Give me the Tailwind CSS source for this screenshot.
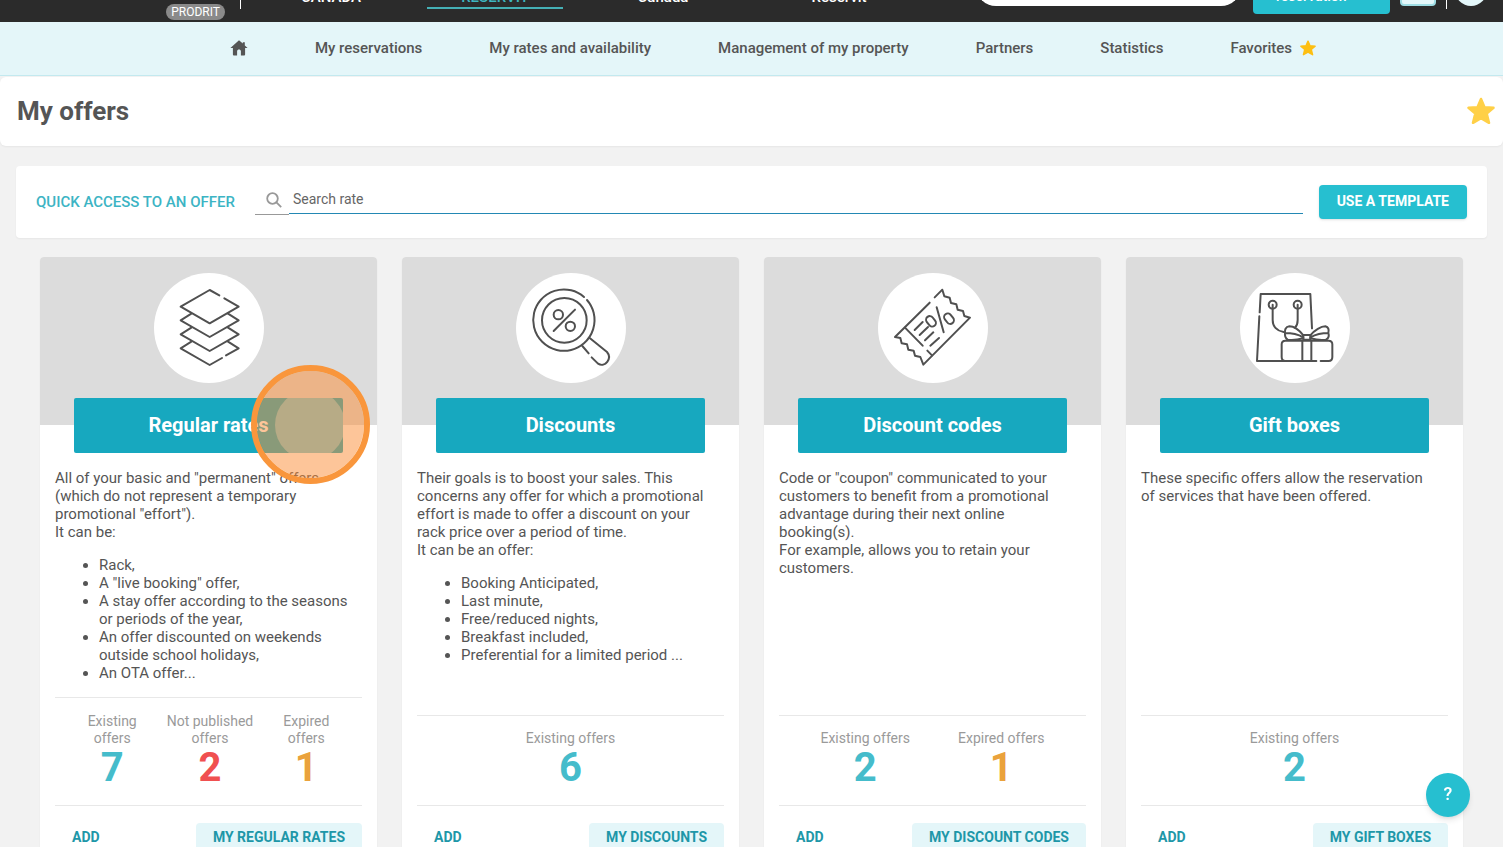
<!DOCTYPE html>
<html lang="en">
<head>
  <meta charset="UTF-8">
  <meta name="viewport" content="width=device-width, initial-scale=1.0">
  <title>My offers</title>
  <script src="https://cdn.jsdelivr.net/npm/@tailwindcss/browser@4"></script>
</head>
<body class="relative h-screen overflow-hidden bg-[#f2f2f2] font-[Roboto,sans-serif] text-[15px] leading-[18px] text-[#555]">

  <!-- Top bar, scrolled partly out of view -->
  <header class="-mt-[42px] flex h-16 items-start bg-[#2b2b2b] text-[15px] font-medium text-white">
    <div class="flex w-[240px] justify-end pt-[46px] pr-[15px]">
      <span class="h-4 rounded-full bg-[#8a8a8a] px-[5px] text-[12px] leading-4 font-normal">PRODRIT</span>
    </div>
    <div class="flex h-[51px] flex-1 items-start border-l border-white">
      <a href="#" class="ml-[22px] w-[136px] pt-[30px] text-center">CANADA</a>
      <a href="#" class="ml-7 h-[51px] w-[136px] border-b-2 border-[#45b0b5] pt-[30px] text-center text-[#3db5bf]">RESERVIT</a>
      <a href="#" class="ml-8 w-[136px] pt-[30px] text-center">Canada</a>
      <a href="#" class="ml-10 w-[136px] pt-[30px] text-center">Reservit</a>
    </div>
    <div class="flex items-start">
      <input type="text" aria-label="Search" class="mt-2 h-10 w-[265px] rounded-full bg-white px-4">
      <button class="ml-3 flex h-14 w-[137px] items-end rounded bg-[#26bfd0] pb-[9px] pl-[23px] text-[14px]">reservation</button>
      <button aria-label="Language" class="ml-[10px] mt-3 h-9 w-9 rounded border-2 border-[#9fdde4] bg-[#e4f7fa]"></button>
      <span class="ml-[10px] h-[51px] w-px bg-white"></span>
      <button aria-label="Account" class="mt-4 mr-4 ml-2 h-8 w-8 rounded-full bg-[#e4f7fa]"></button>
    </div>
  </header>

  <nav class="flex h-[54px] items-center justify-center gap-[67px] border-b border-[#c3e9ef] bg-[#e4f6f9] pb-0.5 pl-[43px] text-[15px] font-medium">
    <a href="#" aria-label="Home">
      <svg class="h-[18px] w-[18px]" viewBox="0 0 18 18" fill="#555"><path d="M9 1.200 0.400 9h2.500v6.600c0 .6.3.9.9.9h3.300v-4.300c0-2.400 3.800-2.400 3.800 0v4.300h3.300c.6 0 .9-.3.9-.9V9h2.500L14.800 6.400V3.200h-2v1.400z"/></svg>
    </a>
    <a href="#">My reservations</a>
    <a href="#">My rates and availability</a>
    <a href="#">Management of my property</a>
    <a href="#">Partners</a>
    <a href="#">Statistics</a>
    <a href="#" class="flex items-center gap-2">Favorites
      <svg class="h-4 w-4" viewBox="0 0 28 28" fill="#fdbf12" stroke="#fdbf12" stroke-width="2.500" stroke-linejoin="round"><path d="M14 2l3.500 8.200 9 .6-6.800 5.800 2.300 9.200-8-4.600-8 4.600 2.300-9.200L1.500 10.800l9-.6z"/></svg>
    </a>
  </nav>

  <div class="mt-px flex h-[69px] items-center justify-between rounded-md bg-white pr-2 pb-0.5 pl-[17px] shadow-xs">
    <h1 class="text-[26px] leading-8 font-bold">My offers</h1>
    <button aria-label="Remove from favorites">
      <svg class="h-7 w-7" viewBox="0 0 28 28" fill="#ffd047" stroke="#ffd047" stroke-width="2.500" stroke-linejoin="round"><path d="M14 2l3.500 8.200 9 .6-6.800 5.800 2.300 9.200-8-4.600-8 4.600 2.300-9.200L1.500 10.800l9-.6z"/></svg>
    </button>
  </div>

  <main>
    <section class="mx-4 mt-5 flex h-[72px] items-center rounded bg-white px-5 shadow-xs">
      <label for="rate" class="text-[15px] font-medium text-[#3cb4c4]">QUICK ACCESS TO AN OFFER</label>
      <div class="ml-5 flex flex-1 pb-1">
        <span class="flex h-[30px] w-[34px] items-center justify-center border-b border-[#999] pl-1">
          <svg class="h-4 w-4" viewBox="0 0 16 16" fill="none" stroke="#999" stroke-width="1.800"><circle cx="6.500" cy="6.500" r="5.300"/><path d="M10.400 10.400 15.200 15.200"/></svg>
        </span>
        <input id="rate" type="text" placeholder="Search rate" class="h-[29px] flex-1 border-b border-[#2388b4] pl-1 text-[14px] outline-none placeholder:text-[#666]">
      </div>
      <button class="ml-4 h-[34px] rounded bg-[#26bfd0] px-[18px] pb-0.5 text-[14px] font-bold text-white shadow">USE A TEMPLATE</button>
    </section>

    <div class="mt-[19px] grid grid-cols-4 gap-[25px] px-10">

      <!-- Regular rates -->
      <article class="flex h-[610px] flex-col rounded-sm bg-white shadow-xs">
        <div class="flex h-[168px] flex-col items-center rounded-t-sm bg-[#dcdcdc] pt-4">
          <svg class="h-[110px] w-[110px] shrink-0 rounded-full bg-white" viewBox="39 39 330 330" fill="none" stroke="#505050" stroke-width="6" stroke-linejoin="round" stroke-linecap="round">
            <path d="M235 106 206 90 119 140 206 190 293 140 250 115"/>
            <path d="M151 161 119 181 206 231 293 181 261 161"/>
            <path d="M151 203 119 223 206 273 293 223 261 203"/>
            <path d="M151 245 119 265 206 315 243 294M255 286 293 265 261 245"/>
          </svg>
          <button class="relative mt-[15px] h-[55px] w-4/5 shrink-0 overflow-hidden rounded-xs bg-[#17a8bf] pb-0.5 text-[20px] font-bold text-white">Regular rates
            <span class="absolute -top-2 -right-[2px] h-[70px] w-[70px] rounded-full bg-white/40"></span>
          </button>
        </div>
        <div class="flex-1 px-[15px] pt-11">
          <p>All of your basic and "permanent" offers<br>(which do not represent a temporary promotional "effort").<br>It can be:</p>
          <ul class="mt-[15px] list-disc pl-11">
            <li>Rack,</li>
            <li>A "live booking" offer,</li>
            <li>A stay offer according to the seasons or periods of the year,</li>
            <li>An offer discounted on weekends outside school holidays,</li>
            <li>An OTA offer...</li>
          </ul>
        </div>
        <div class="mx-[15px] flex h-[109px] items-end justify-center gap-[30px] border-y border-[#e8e8e8] pb-4 text-center text-[14px] leading-[17px] text-[#9a9a9a]">
          <p>Existing<br>offers<strong class="block text-[40px] leading-[42px] text-[#45bccb]">7</strong></p>
          <p>Not published<br>offers<strong class="block text-[40px] leading-[42px] text-[#f05050]">2</strong></p>
          <p>Expired<br>offers<strong class="block text-[40px] leading-[42px] text-[#eaa23c]">1</strong></p>
        </div>
        <div class="mx-[15px] flex justify-between pt-[17px] pb-4 text-[14px] font-bold text-[#1e97a8]">
          <button class="h-7 px-[17px]">ADD</button>
          <button class="h-7 rounded bg-[#e4f6f9] px-[17px]">MY REGULAR RATES</button>
        </div>
      </article>

      <!-- Discounts -->
      <article class="flex h-[610px] flex-col rounded-sm bg-white shadow-xs">
        <div class="flex h-[168px] flex-col items-center rounded-t-sm bg-[#dcdcdc] pt-4">
          <svg class="h-[110px] w-[110px] shrink-0 rounded-full bg-white" viewBox="15 24 330 330" fill="none" stroke="#505050" stroke-width="6" stroke-linejoin="round" stroke-linecap="round">
            <circle cx="160" cy="166" r="67"/>
            <path d="M219 96A92 92 0 1 0 228 105"/>
            <circle cx="142" cy="149" r="14"/>
            <circle cx="178" cy="184" r="14"/>
            <path d="M192 134 128 198"/>
            <path d="M237 220 288 261C304 280 283 309 261 296L242 277M233 265 214 243"/>
          </svg>
          <button class="mt-[15px] h-[55px] w-4/5 shrink-0 rounded-xs bg-[#17a8bf] pb-0.5 text-[20px] font-bold text-white">Discounts</button>
        </div>
        <div class="flex-1 px-[15px] pt-11">
          <p class="pr-[15px]">Their goals is to boost your sales. This concerns any offer for which a promotional effort is made to offer a discount on your rack price over a period of time.<br>It can be an offer:</p>
          <ul class="mt-[15px] list-disc pl-11">
            <li>Booking Anticipated,</li>
            <li>Last minute,</li>
            <li>Free/reduced nights,</li>
            <li>Breakfast included,</li>
            <li>Preferential for a limited period ...</li>
          </ul>
        </div>
        <div class="mx-[15px] flex h-[91px] items-end justify-center border-y border-[#e8e8e8] pb-4 text-center text-[14px] leading-[17px] text-[#9a9a9a]">
          <p>Existing offers<strong class="block text-[40px] leading-[42px] text-[#45bccb]">6</strong></p>
        </div>
        <div class="mx-[15px] flex justify-between pt-[17px] pb-4 text-[14px] font-bold text-[#1e97a8]">
          <button class="h-7 px-[17px]">ADD</button>
          <button class="h-7 rounded bg-[#e4f6f9] px-[17px]">MY DISCOUNTS</button>
        </div>
      </article>

      <!-- Discount codes -->
      <article class="flex h-[610px] flex-col rounded-sm bg-white shadow-xs">
        <div class="flex h-[168px] flex-col items-center rounded-t-sm bg-[#dcdcdc] pt-4">
          <svg class="h-[110px] w-[110px] shrink-0 rounded-full bg-white" viewBox="24 24 330 330" fill="none" stroke="#505050" stroke-width="6" stroke-linejoin="round" stroke-linecap="round">
            <path d="M179 113 75 216 91 219 95 235 111 238 115 254 131 257 135 272 151 276 160 299 300 158 283 153 279 138 263 134 259 118 243 114 239 98 223 94 217 74 194 97"/>
            <path d="M105 188 158 242M172 257 186 271"/>
            <path d="M134 195 158 171M149 210 174 186M165 226 190 202M181 242 207 219"/>
            <path d="M200 127 221 202"/>
            <rect x="172" y="152" width="22" height="34" rx="11" transform="rotate(-38 183 169)"/>
            <rect x="226" y="144" width="22" height="34" rx="11" transform="rotate(-38 237 161)"/>
          </svg>
          <button class="mt-[15px] h-[55px] w-4/5 shrink-0 rounded-xs bg-[#17a8bf] pb-0.5 text-[20px] font-bold text-white">Discount codes</button>
        </div>
        <div class="flex-1 px-[15px] pt-11">
          <p class="pr-[15px]">Code or "coupon" communicated to your customers to benefit from a promotional advantage during their next online booking(s).<br>For example, allows you to retain your customers.</p>
        </div>
        <div class="mx-[15px] flex h-[91px] items-end justify-center gap-12 border-y border-[#e8e8e8] pb-4 text-center text-[14px] leading-[17px] text-[#9a9a9a]">
          <p>Existing offers<strong class="block text-[40px] leading-[42px] text-[#45bccb]">2</strong></p>
          <p>Expired offers<strong class="block text-[40px] leading-[42px] text-[#eaa23c]">1</strong></p>
        </div>
        <div class="mx-[15px] flex justify-between pt-[17px] pb-4 text-[14px] font-bold text-[#1e97a8]">
          <button class="h-7 px-[17px]">ADD</button>
          <button class="h-7 rounded bg-[#e4f6f9] px-[17px]">MY DISCOUNT CODES</button>
        </div>
      </article>

      <!-- Gift boxes -->
      <article class="flex h-[610px] flex-col rounded-sm bg-white shadow-xs">
        <div class="flex h-[168px] flex-col items-center rounded-t-sm bg-[#dcdcdc] pt-4">
          <svg class="h-[110px] w-[110px] shrink-0 rounded-full bg-white" viewBox="15 24 330 330" fill="none" stroke="#505050" stroke-width="6" stroke-linejoin="round" stroke-linecap="round">
            <path d="M74 142 77 87H226L231 190M73 154 66 288H244"/>
            <circle cx="113" cy="119" r="12"/>
            <circle cx="188" cy="119" r="12"/>
            <path d="M113 119V165C113 185 126 198 146 201M188 119V165C188 175 185 183 180 188"/>
            <path d="M151 288C144 288 140 283 140 276V238C140 231 144 227 151 227H281C288 227 292 231 292 238V276C292 283 288 288 281 288H257"/>
            <path d="M202 227V287M229 227V287"/>
            <rect x="205" y="210" width="21" height="14"/>
            <path d="M205 211C192 195 176 184 163 184 151 185 149 196 150 204 164 204 187 207 205 217M150 204C149 212 152 220 158 224 172 226 189 224 205 220"/>
            <path d="M226 211C239 195 258 184 271 184 282 187 282 196 280 204 264 204 243 208 226 217M280 204C283 212 280 220 273 224 258 226 242 224 226 220"/>
          </svg>
          <button class="mt-[15px] h-[55px] w-4/5 shrink-0 rounded-xs bg-[#17a8bf] pb-0.5 text-[20px] font-bold text-white">Gift boxes</button>
        </div>
        <div class="flex-1 px-[15px] pt-11">
          <p class="pr-[15px]">These specific offers allow the reservation of services that have been offered.</p>
        </div>
        <div class="mx-[15px] flex h-[91px] items-end justify-center border-y border-[#e8e8e8] pb-4 text-center text-[14px] leading-[17px] text-[#9a9a9a]">
          <p>Existing offers<strong class="block text-[40px] leading-[42px] text-[#45bccb]">2</strong></p>
        </div>
        <div class="mx-[15px] flex justify-between pt-[17px] pb-4 text-[14px] font-bold text-[#1e97a8]">
          <button class="h-7 px-[17px]">ADD</button>
          <button class="h-7 rounded bg-[#e4f6f9] px-[17px]">MY GIFT BOXES</button>
        </div>
      </article>
    </div>
  </main>

  <!-- Click marker -->
  <div class="pointer-events-none absolute top-[365px] left-[251px] h-[119px] w-[119px] rounded-full border-6 border-[#f9963c] bg-[#fb8b33]/50 bg-clip-padding"></div>

  <button aria-label="Help" class="fixed right-[33px] bottom-[30px] h-11 w-11 rounded-full bg-[#26bfd0] pb-0.5 text-[18px] font-medium text-white shadow-md">?</button>
</body>
</html>
